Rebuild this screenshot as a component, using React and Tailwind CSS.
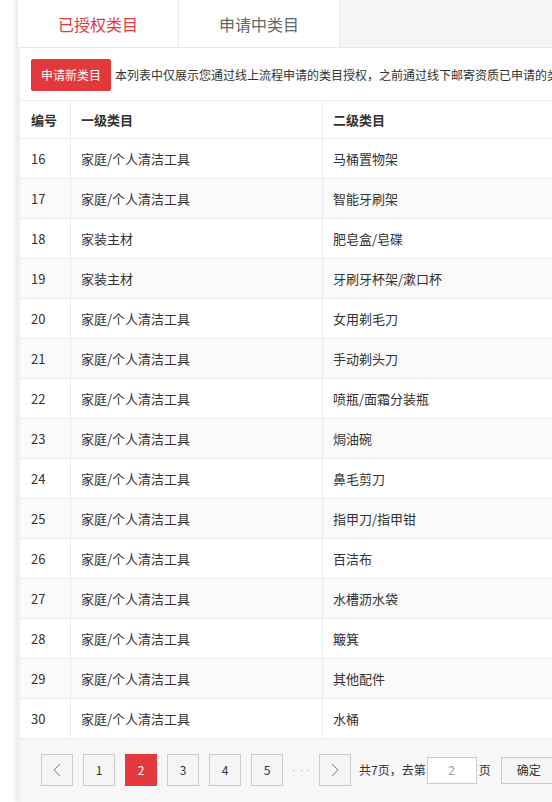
import React from "react";

const rows = [
  [16, "家庭/个人清洁工具", "马桶置物架"],
  [17, "家庭/个人清洁工具", "智能牙刷架"],
  [18, "家装主材", "肥皂盒/皂碟"],
  [19, "家装主材", "牙刷牙杯架/漱口杯"],
  [20, "家庭/个人清洁工具", "女用剃毛刀"],
  [21, "家庭/个人清洁工具", "手动剃头刀"],
  [22, "家庭/个人清洁工具", "喷瓶/面霜分装瓶"],
  [23, "家庭/个人清洁工具", "焗油碗"],
  [24, "家庭/个人清洁工具", "鼻毛剪刀"],
  [25, "家庭/个人清洁工具", "指甲刀/指甲钳"],
  [26, "家庭/个人清洁工具", "百洁布"],
  [27, "家庭/个人清洁工具", "水槽沥水袋"],
  [28, "家庭/个人清洁工具", "簸箕"],
  [29, "家庭/个人清洁工具", "其他配件"],
  [30, "家庭/个人清洁工具", "水桶"],
];

function Chevron({ dir }) {
  return (
    <svg width="8" height="14" viewBox="0 0 8 14" fill="none">
      {dir === "left" ? (
        <polyline points="7,1 1,7 7,13" stroke="#6b7fa3" strokeWidth="1" />
      ) : (
        <polyline points="1,1 7,7 1,13" stroke="#6b7fa3" strokeWidth="1" />
      )}
    </svg>
  );
}

function PageBtn({ children, active }) {
  return (
    <div
      className={
        active
          ? "w-[32px] h-[32px] flex items-center justify-center bg-[#e4393c] border border-[#e4393c] text-white text-[12px] shrink-0"
          : "w-[32px] h-[32px] flex items-center justify-center bg-[#f5f5f5] border border-[#cccccc] text-[#333] text-[12px] shrink-0"
      }
    >
      {children}
    </div>
  );
}

export default function App() {
  return (
    <div className="w-[552px] h-[802px] overflow-hidden bg-white relative font-['Noto_Sans_CJK_SC',sans-serif] text-[#333]">
      <div className="ml-[18px] w-[900px] h-[802px] shadow-[-3px_0_4px_rgba(0,0,0,0.09)] bg-[#f5f5f5]">
        {/* Tabs */}
        <div className="flex h-[48px] border-b border-[#e8e8e8] bg-[#f5f5f5]">
          <div className="w-[161px] h-full bg-white border-r border-[#e8e8e8] flex items-center justify-center text-[16px] leading-none text-[#e4393c] pt-[1px]">
            已授权类目
          </div>
          <div className="w-[161px] h-full bg-white border-r border-[#e8e8e8] flex items-center justify-center text-[16px] leading-none text-[#666] pt-[1px]">
            申请中类目
          </div>
        </div>
        {/* Panel */}
        <div className="ml-[1px] bg-white border-l border-[#ececec]">
          <div className="h-[52px] flex items-center pl-[11px] pt-[1px]">
            <div className="h-[32px] px-[10px] bg-[#e4393c] rounded-[2px] text-white text-[12px] leading-none flex items-center shrink-0">
              申请新类目
            </div>
            <div className="ml-[4px] text-[12px] leading-none text-[#333] whitespace-nowrap">
              本列表中仅展示您通过线上流程申请的类目授权，之前通过线下邮寄资质已申请的类目请在类目管理页面中查看
            </div>
          </div>
          {/* Table header */}
          <div className="grid grid-cols-[51px_252px_1fr] h-[39px] border-t border-b border-[#ececec] text-[13px] font-semibold leading-none">
            <div className="border-r border-[#ececec] flex items-center pl-[11px]">编号</div>
            <div className="border-r border-[#ececec] flex items-center pl-[10px]">一级类目</div>
            <div className="flex items-center pl-[10px]">二级类目</div>
          </div>
          {rows.map((r, i) => (
            <div
              key={r[0]}
              className={
                i % 2 === 1
                  ? "grid grid-cols-[51px_252px_1fr] h-[40px] border-b border-[#ececec] text-[13px] leading-none bg-[#fafafa]"
                  : "grid grid-cols-[51px_252px_1fr] h-[40px] border-b border-[#ececec] text-[13px] leading-none bg-white"
              }
            >
              <div className="border-r border-[#ececec] flex items-center pl-[11px]">{r[0]}</div>
              <div className="border-r border-[#ececec] flex items-center pl-[10px]">{r[1]}</div>
              <div className="flex items-center pl-[10px]">{r[2]}</div>
            </div>
          ))}
          {/* Pagination */}
          <div className="bg-[#f7f7f7] h-[80px] flex items-start pt-[15px] pl-[21px]">
            <div className="flex items-center gap-[10px]">
              <PageBtn>
                <Chevron dir="left" />
              </PageBtn>
              <PageBtn>1</PageBtn>
              <PageBtn active>2</PageBtn>
              <PageBtn>3</PageBtn>
              <PageBtn>4</PageBtn>
              <PageBtn>5</PageBtn>
              <div className="w-[16px] flex items-center justify-between">
                <span className="w-[1px] h-[1px] bg-[#aaa]"></span>
                <span className="w-[1px] h-[1px] bg-[#aaa]"></span>
                <span className="w-[1px] h-[1px] bg-[#aaa]"></span>
              </div>
              <PageBtn>
                <Chevron dir="right" />
              </PageBtn>
            </div>
            <div className="flex items-center h-[32px] ml-[8px] text-[12px] leading-none text-[#333]">
              <span>共7页，去第</span>
              <div className="ml-[1px] w-[50px] h-[27px] bg-white border border-[#cccccc] flex items-center justify-center text-[#999]">
                2
              </div>
              <span className="ml-[2px]">页</span>
              <div className="ml-[10px] h-[27px] px-[15px] bg-[#f5f5f5] border border-[#cccccc] flex items-center text-[#333]">
                确定
              </div>
            </div>
          </div>
        </div>
      </div>
    </div>
  );
}
